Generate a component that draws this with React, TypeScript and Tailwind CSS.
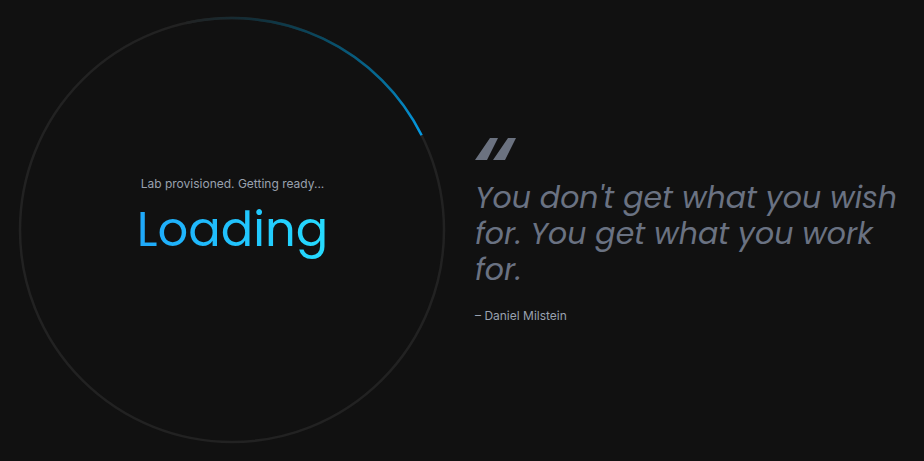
const displayFont = "font-[Poppins,Inter,sans-serif]";

function ProgressRing() {
  return (
    <svg viewBox="0 0 433 433" fill="none" className="col-start-1 row-start-1 w-full" aria-hidden="true">
      <defs>
        <linearGradient id="arc" gradientUnits="userSpaceOnUse" x1="170" y1="4" x2="406" y2="121">
          <stop offset="0" stopColor="#222222" />
          <stop offset="0.25" stopColor="#11303b" />
          <stop offset="0.5" stopColor="#094a62" />
          <stop offset="0.8" stopColor="#04709e" />
          <stop offset="1" stopColor="#039be5" />
        </linearGradient>
      </defs>
      <circle cx="216" cy="216" r="212" stroke="#222222" strokeWidth="2.5" />
      <path d="M170 9.05A212 212 0 0 1 405.6 121.2" stroke="url(#arc)" strokeWidth="2.5" />
    </svg>
  );
}

function QuoteMark() {
  return (
    <svg width="42" height="22" viewBox="0 0 42 22" fill="#6b7280" aria-hidden="true">
      <path d="M0 22L15 0H23L12 22ZM18 22L33 0H41L30 22Z" />
    </svg>
  );
}

export default function App() {
  return (
    <main className="grid min-h-screen grid-cols-2 items-center gap-[26px] bg-[#111111] px-4 font-[Inter,sans-serif]">
      <section className="grid place-items-center" role="status">
        <ProgressRing />
        <div className="col-start-1 row-start-1 flex flex-col items-center gap-2 pb-[26px]">
          <p className="text-xs text-gray-400">Lab provisioned. Getting ready...</p>
          <h1
            className={`${displayFont} bg-gradient-to-r from-[#1fa8fa] to-[#26dcff] bg-clip-text text-5xl leading-[60px] font-normal text-transparent`}
          >
            Loading
          </h1>
        </div>
      </section>
      <figure className="flex flex-col items-start">
        <QuoteMark />
        <blockquote className={`${displayFont} mt-5 text-3xl font-normal text-gray-500 italic`}>
          You don't get what you wish for. You get what you work for.
        </blockquote>
        <figcaption className="mt-5 text-xs text-gray-400">– Daniel Milstein</figcaption>
      </figure>
    </main>
  );
}
